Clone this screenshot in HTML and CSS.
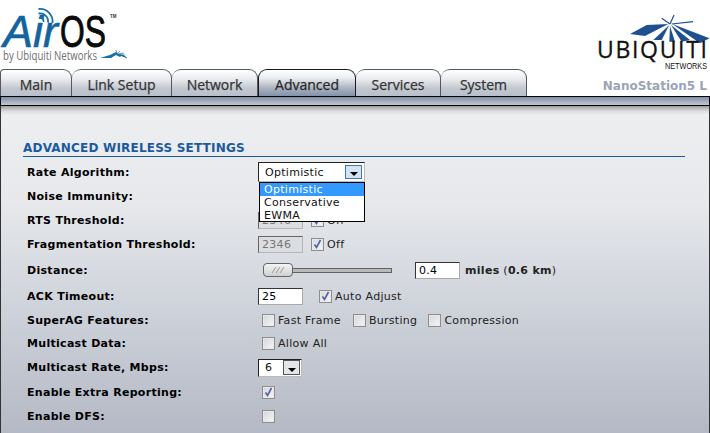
FILE: index.html
```html
<!DOCTYPE html>
<html lang="en">
<head>
<meta charset="utf-8">
<title>AirOS Advanced</title>
<link rel="stylesheet" href="styles.css">
</head>
<body>
<header class="head">
  <svg class="logo-air" width="140" height="69" viewBox="0 0 140 69">
    <text x="3" y="47" class="air" textLength="55" lengthAdjust="spacingAndGlyphs">Air</text>
    <text x="60" y="46.500" class="os" textLength="46" lengthAdjust="spacingAndGlyphs">OS</text>
    <text x="110" y="18" class="tm">TM</text>
    <g fill="none" stroke="#1a6ea8" stroke-width="1.8">
      <path d="M39 18a3.5 3.5 0 0 1 4.5 4"/>
      <path d="M38.5 13.5a8 8 0 0 1 9.5 9"/>
      <path d="M38.500 9a12.500 12.500 0 0 1 14 14"/>
    </g>
    <text x="3" y="59.500" class="by" textLength="94" lengthAdjust="spacingAndGlyphs">by Ubiquiti Networks</text>
    <path d="M100 58l10-3 6-3 2 2 9 1-3 0 3 3-6-2-1 1-4-2-5 3z" fill="#1a6ea8"/>
    <path d="M116 50l1 4M120 51l-3 3M124 53l-6 1M127 58l-8-4" stroke="#1a6ea8" stroke-width=".7"/>
  </svg>
  <svg class="logo-ubnt" width="118" height="69" viewBox="0 0 118 69">
    <g fill="#1d4f91">
      <path d="M76.300 24L54.700 25 38 34l15 2z"/>
      <path d="M77.300 25L61.300 40l8.400 0z"/>
      <path d="M78 26l-.7 15.700h5.700z"/>
      <path d="M79 25l10.700 16.700 8.300-1.700z"/>
      <path d="M80.300 24L108 43.300 117.500 38.300z"/>
    </g>
    <path d="M78 24l4-9M78 24l-8.300-5.700M79.700 24L101 21.700" stroke="#1d4f91" stroke-width="1.200" fill="none"/>
    <text x="5" y="58" class="ub" textLength="110" lengthAdjust="spacing">UBIQUITI</text>
    <text x="73" y="68.500" class="nw" textLength="42" lengthAdjust="spacingAndGlyphs">NETWORKS</text>
  </svg>
</header>
<nav class="tabs">
  <a class="tab t-main">Main</a>
  <a class="tab t-link">Link Setup</a>
  <a class="tab t-net">Network</a>
  <a class="tab t-adv active">Advanced</a>
  <a class="tab t-svc">Services</a>
  <a class="tab t-sys">System</a>
  <span class="device">NanoStation5 L</span>
</nav>
<div class="band"></div>
<main class="content">
  <h2 class="title">ADVANCED WIRELESS SETTINGS</h2>
  <div class="form">
    <div class="row"><label>Rate Algorithm:</label>
      <div class="field">
        <div class="select sel-rate"><span class="val">Optimistic</span><span class="btn hot"><i class="arrow"></i></span></div>
        <ul class="menu"><li class="on">Optimistic</li><li>Conservative</li><li>EWMA</li></ul>
      </div>
    </div>
    <div class="row"><label>Noise Immunity:</label><div class="field"></div></div>
    <div class="row"><label>RTS Threshold:</label>
      <div class="field"><span class="input dis">2346</span><span class="cb checked ml8"><svg width="11" height="11" viewBox="0 0 11 11"><path d="M2.500 5.500l2 3L8.500 1" class="tick"/></svg></span><span class="opt">Off</span></div>
    </div>
    <div class="row"><label>Fragmentation Threshold:</label>
      <div class="field"><span class="input dis">2346</span><span class="cb checked ml8"><svg width="11" height="11" viewBox="0 0 11 11"><path d="M2.500 5.500l2 3L8.500 1" class="tick"/></svg></span><span class="opt">Off</span></div>
    </div>
    <div class="row r28"><label>Distance:</label>
      <div class="field">
        <div class="slider"><span class="knob"><svg width="14" height="6" viewBox="0 0 14 6"><path d="M1 6l4-6M5 6l4-6M9 6l4-6" stroke="#999" fill="none"/></svg></span><span class="track"></span></div>
        <span class="input dist">0.4</span><span class="miles"><b>miles</b> (<b>0.6 km</b>)</span>
      </div>
    </div>
    <div class="row"><label>ACK Timeout:</label>
      <div class="field"><span class="input ack">25</span><span class="cb checked ml16"><svg width="11" height="11" viewBox="0 0 11 11"><path d="M2.500 5.500l2 3L8.500 1" class="tick"/></svg></span><span class="opt">Auto Adjust</span></div>
    </div>
    <div class="row"><label>SuperAG Features:</label>
      <div class="field ind"><span class="cb"></span><span class="opt w1">Fast Frame</span><span class="cb"></span><span class="opt w2">Bursting</span><span class="cb"></span><span class="opt">Compression</span></div>
    </div>
    <div class="row r23"><label>Multicast Data:</label>
      <div class="field ind"><span class="cb"></span><span class="opt">Allow All</span></div>
    </div>
    <div class="row r25"><label>Multicast Rate, Mbps:</label>
      <div class="field"><div class="select sel-mc"><span class="val">6</span><span class="btn"><i class="arrow"></i></span></div></div>
    </div>
    <div class="row"><label>Enable Extra Reporting:</label>
      <div class="field ind"><span class="cb checked"><svg width="11" height="11" viewBox="0 0 11 11"><path d="M2.500 5.500l2 3L8.500 1" class="tick"/></svg></span></div>
    </div>
    <div class="row"><label>Enable DFS:</label>
      <div class="field ind"><span class="cb"></span></div>
    </div>
  </div>
</main>
</body>
</html>
```
FILE: styles.css
```css
* { box-sizing: border-box; }
html, body { margin: 0; padding: 0; }
body {
  width: 710px;
  height: 433px;
  overflow: hidden;
  background: #fff;
  font-family: "DejaVu Sans", Verdana, sans-serif;
  font-size: 11px;
  color: #000;
}
.head {
  display: flex;
  justify-content: space-between;
  height: 69px;
}
.air { font: italic 400 45px "Liberation Sans", sans-serif; fill: #14639f; stroke: #14639f; stroke-width: .6px; }
.os { font: 400 45px "Liberation Sans", sans-serif; fill: #0a0a0a; stroke: #0a0a0a; stroke-width: .9px; }
.tm { font: 700 4.500px "Liberation Sans", sans-serif; fill: #333; }
.by { font: 400 12px "Open Sans", sans-serif; fill: #6d6f72; }
.ub { font: 400 23px "Open Sans", sans-serif; fill: #111; stroke: #111; stroke-width: .3px; }
.nw { font: 400 9px "Liberation Sans", sans-serif; fill: #111; }

.tabs {
  display: flex;
  align-items: flex-end;
  height: 27px;
}
.tab {
  height: 27px;
  display: flex;
  align-items: center;
  justify-content: center;
  padding-top: 3px;
  border: 1px solid #55595f;
  border-bottom: 0;
  border-left-width: 0;
  border-radius: 0 9px 0 0;
  border-top-left-radius: 9px;
  background: linear-gradient(#fff 0%, #e9ebee 35%, #c3c8d0 70%, #b9bfc9 100%);
  font-family: "Open Sans", sans-serif;
  font-size: 14px;
  font-weight: 400;
  color: #333;
  -webkit-text-stroke: .25px #333;
}
.t-main { width: 72px; border-left-width: 1px; border-top-left-radius: 4px; }
.t-link { width: 100px; }
.t-net { width: 86px; }
.t-adv { width: 98px; }
.t-svc { width: 85px; }
.t-sys { width: 86px; }
.tab.active {
  border: 1px solid #1a1a1a;
  border-bottom: 0;
  background: linear-gradient(#fff 0%, #eceef0 30%, #adb5c2 68%, #8292a9 100%);
  color: #222;
}
.device {
  margin-left: auto;
  margin-right: 3px;
  align-self: center;
  padding-top: 6px;
  font-size: 12px;
  font-weight: 700;
  color: #9aa4b5;
}
.band {
  height: 10px;
  border: 1px solid #000;
  background: linear-gradient(#7e8da6, #c3c9d3);
}
.content {
  height: 327px;
  border-left: 1px solid #333;
  border-right: 1px solid #333;
  background:
    linear-gradient(#9d9d9d 0, #dcdcde 5px, rgba(236,237,240,0) 9px),
    linear-gradient(#eeeff1 0%, #e6e8eb 30%, #ced2da 62%, #b4b9c5 100%);
  padding: 35px 24px 0 22px;
  display: flow-root;
}
.title {
  margin: 0;
  height: 16px;
  line-height: 15px;
  font-size: 12px;
  font-weight: 700;
  letter-spacing: .2px;
  color: #1c5a9e;
  border-bottom: 1px solid #1c5a9e;
}
.form { margin-left: 4px; margin-top: 3px; letter-spacing: .3px; }
.row {
  display: flex;
  align-items: center;
  height: 24px;
}
.r28 { height: 28px; }
.r23 { height: 23px; }
.r25 { height: 25px; }
.row label {
  width: 231px;
  font-weight: 700;
  flex: none;
}
.field {
  position: relative;
  display: flex;
  align-items: center;
  color: #222;
}
.ind { padding-left: 4px; }
.input {
  display: block;
  height: 17px;
  line-height: 16px;
  padding-left: 3px;
  background: #fff;
  border: 1px solid #aaa;
  border-top-color: #333;
  border-left-color: #333;
  width: 45px;
  font-size: 11px;
  color: #000;
}
.dis {
  background: #dcdde0;
  border-color: #b5b5b5;
  border-top-color: #666;
  border-left-color: #666;
  color: #777;
}
.cb {
  display: flex;
  align-items: center;
  justify-content: center;
  width: 13px;
  height: 13px;
  flex: none;
  border: 1px solid #8e8e8e;
  background: linear-gradient(135deg, #d5d6da, #f6f6f7);
  box-shadow: inset 0 0 0 1px #e8e8ea;
}
.tick { fill: none; stroke: #4f5fa8; stroke-width: 1.600; }
.ml8 { margin-left: 8px; }
.ml16 { margin-left: 16px; }
.opt { margin-left: 3px; }
.w1 { margin-right: 12px; }
.w2 { margin-right: 11px; }
.select {
  display: flex;
  align-items: center;
  justify-content: space-between;
  background: #fff;
  border: 1px solid #bbb;
  border-top-color: #222;
  border-left-color: #222;
  color: #111;
}
.sel-rate { width: 107px; height: 20px; padding: 0 2px 0 6px; }
.sel-mc { width: 44px; height: 18px; padding: 0 1px 0 6px; }
.btn {
  display: flex;
  align-items: flex-end;
  justify-content: center;
  width: 17px;
  height: 15px;
  background: #e4e5e8;
  border: 1px solid #555;
  padding-bottom: 2px;
}
.btn.hot { height: 14px; background: #d5e3f0; border-color: #3f79a8; }
.arrow {
  width: 0;
  height: 0;
  border: 4px solid transparent;
  border-top-color: #000;
  border-bottom-width: 0;
}
.menu {
  position: absolute;
  top: 20px;
  left: 1px;
  z-index: 3;
  width: 106px;
  height: 40px;
  margin: 0;
  padding: 0;
  list-style: none;
  background: #fff;
  border: 1px solid #000;
  color: #111;
}
.menu li { height: 13px; line-height: 13px; padding-left: 4px; }
.menu .on { background: #3399ff; color: #fff; }
.slider { display: flex; align-items: center; width: 129px; margin: 0 23px 0 5px; }
.knob {
  display: flex;
  align-items: center;
  justify-content: center;
  width: 30px;
  height: 14px;
  flex: none;
  border: 1px solid #666;
  border-radius: 4px;
  background: linear-gradient(#f4f4f4, #cfd0d2);
}
.track {
  flex: 1;
  height: 5px;
  background: #b9bab9;
  border: 1px solid #5f6460;
  border-left: 0;
}
.dist { width: 45px; }
.ack { width: 45px; }
.miles { margin-left: 5px; }
.miles b { font-weight: 700; }
```
